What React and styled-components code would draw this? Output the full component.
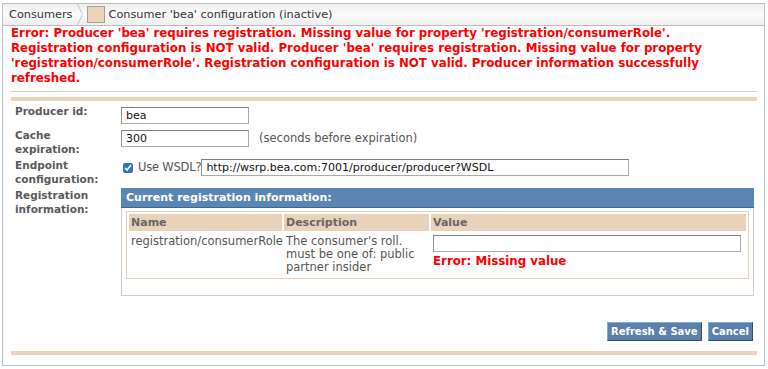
import styled, { createGlobalStyle } from "styled-components"

const Global = createGlobalStyle`
    body {
        margin: 0;
        background: #fff;
        font-family: "DejaVu Sans", Verdana, sans-serif;
        font-size: 11.5px;
        color: #555;
    }
`
const Frame = styled.div`
    margin: 3px 3px 0 2px;
    border: 1px solid #b8c4ca;
    border-top: none;
    height: 363px;
    box-sizing: border-box;
`
const Crumbs = styled.div`
    height: 21px;
    border-top: 1px solid #bdbdbd;
    border-bottom: 1px solid #bdbdbd;
    background: linear-gradient(#efefef, #fbfbfb 50%, #efefef);
    display: flex;
    align-items: center;
    font-size: 11.3px;
    color: #333;
`
const Crumb = styled.span`
    padding-left: 6px;
`
const Chevron = styled.svg`
    width: 6px;
    height: 21px;
    margin: 0 4px 0 4px;
`
const Swatch = styled.span`
    width: 16px;
    height: 15px;
    background: #ecd3b9;
    border: 1px solid #a0a0a0;
    margin-right: 4px;
`
const Body = styled.div`
    padding: 0 7px 0 8px;
`
const ErrorText = styled.div`
    color: #ff0000;
    font-weight: bold;
    font-size: 11.8px;
    line-height: 15px;
    height: 60px;
    max-width: 715px;
`
const Rule = styled.div`
    border-top: 1px solid #d0d0d0;
    margin-top: 5px;
`
const TanBar = styled.div`
    height: 4px;
    background: #edd3b9;
    margin-top: ${p => p.$gap}px;
`
const Form = styled.div`
    display: grid;
    grid-template-columns: 110px 1fr;
    grid-template-rows: 24px 30px 30px 108px;
    margin-top: 3px;
`
const Label = styled.div`
    font-weight: bold;
    font-size: 10.5px;
    color: #5a5a5a;
    line-height: 14px;
    padding-left: 4px;
`
const Field = styled.div`
    display: flex;
    align-items: flex-start;
    padding-top: ${p => p.$top || 0}px;
    color: #555;
`
const TextInput = styled.input`
    width: ${p => p.$w}px;
    height: 17px;
    box-sizing: border-box;
    border: 1px solid #aaa;
    border-top-color: #808080;
    border-left-color: #909090;
    font-family: "DejaVu Sans", Verdana, sans-serif;
    font-size: 11px;
    color: #111;
    padding: 0 4px;
    margin: 0;
    background: #fff;
`
const Hint = styled.span`
    margin-left: 10px;
    line-height: 17px;
`
const Check = styled.input`
    margin: 4px 5px 0 2px;
    width: 10px;
    height: 10px;
    accent-color: #2f6fd6;
`
const CheckLabel = styled.span`
    line-height: 17px;
    margin-right: 0;
    letter-spacing: -0.2px;
`
const Panel = styled.div`
    border: 1px solid #cdcdcd;
    width: 633px;
    height: 108px;
    box-sizing: border-box;
`
const PanelHead = styled.div`
    background: #5a86b1;
    color: #fff;
    font-weight: bold;
    font-size: 11px;
    height: 19px;
    line-height: 19px;
    padding-left: 5px;
    border-bottom: 1px solid #3e6690;
    margin: -1px -1px 0 -1px;
`
const Table = styled.table`
    margin: 3px 4px 0 4px;
    width: 623px;
    border: 1px solid #e8d2bc;
    border-spacing: 2px;
    table-layout: fixed;
`
const Th = styled.th`
    background: #e9d2b9;
    color: #666;
    font-weight: bold;
    font-size: 11px;
    text-align: left;
    padding: 0 2px;
    height: 17px;
    width: ${p => p.$w ? `${p.$w}px` : "auto"};
`
const Td = styled.td`
    vertical-align: top;
    line-height: 13px;
    padding: 2px 2px 2px 2px;
    color: #555;
`
const FieldError = styled.div`
    color: #ff0000;
    font-weight: bold;
    font-size: 11.8px;
    margin-top: 2px;
    line-height: 14px;
`
const Actions = styled.div`
    display: flex;
    justify-content: flex-end;
    gap: 6px;
    padding: 26px 4px 0 0;
`
const Button = styled.button`
    background: #5b80ab;
    color: #fff;
    font-family: "DejaVu Sans", Verdana, sans-serif;
    font-weight: bold;
    font-size: 10px;
    height: 19px;
    padding: 0 3px;
    border: 1px solid #2e4e72;
    border-top-color: #8ea9c8;
    border-left-color: #8ea9c8;
`

function App() {
    return (
        <>
            <Global />
            <Frame>
                <Crumbs>
                    <Crumb>Consumers</Crumb>
                    <Chevron viewBox="0 0 6 21">
                        <path d="M0.5 0 L5.5 10.5 L0.5 21" fill="none" stroke="#c4c4c4" strokeWidth="1" />
                    </Chevron>
                    <Swatch />
                    <span>Consumer 'bea' configuration (inactive)</span>
                </Crumbs>
                <Body>
                    <ErrorText>
                        Error: Producer 'bea' requires registration. Missing value for property 'registration/consumerRole'. Registration configuration is NOT valid. Producer 'bea' requires registration. Missing value for property 'registration/consumerRole'. Registration configuration is NOT valid. Producer information successfully refreshed.
                    </ErrorText>
                    <Rule />
                    <TanBar $gap={5} />
                    <Form>
                        <Label>Producer id:</Label>
                        <Field $top={3}>
                            <TextInput $w={128} defaultValue="bea" />
                        </Field>
                        <Label>Cache<br />expiration:</Label>
                        <Field $top={2}>
                            <TextInput $w={128} defaultValue="300" />
                            <Hint>(seconds before expiration)</Hint>
                        </Field>
                        <Label>Endpoint<br />configuration:</Label>
                        <Field $top={1}>
                            <Check type="checkbox" defaultChecked />
                            <CheckLabel>Use WSDL?</CheckLabel>
                            <TextInput $w={428} defaultValue="http://wsrp.bea.com:7001/producer/producer?WSDL" />
                        </Field>
                        <Label>Registration<br />information:</Label>
                        <Field>
                            <Panel>
                                <PanelHead>Current registration information:</PanelHead>
                                <Table>
                                    <thead>
                                        <tr>
                                            <Th $w={149}>Name</Th>
                                            <Th $w={141}>Description</Th>
                                            <Th>Value</Th>
                                        </tr>
                                    </thead>
                                    <tbody>
                                        <tr>
                                            <Td>registration/consumerRole</Td>
                                            <Td>The consumer's roll. must be one of: public partner insider</Td>
                                            <Td>
                                                <TextInput $w={308} />
                                                <FieldError>Error: Missing value</FieldError>
                                            </Td>
                                        </tr>
                                    </tbody>
                                </Table>
                            </Panel>
                        </Field>
                    </Form>
                    <Actions>
                        <Button>Refresh &amp; Save</Button>
                        <Button>Cancel</Button>
                    </Actions>
                    <TanBar $gap={10} />
                </Body>
            </Frame>
        </>
    )
}

export default App
